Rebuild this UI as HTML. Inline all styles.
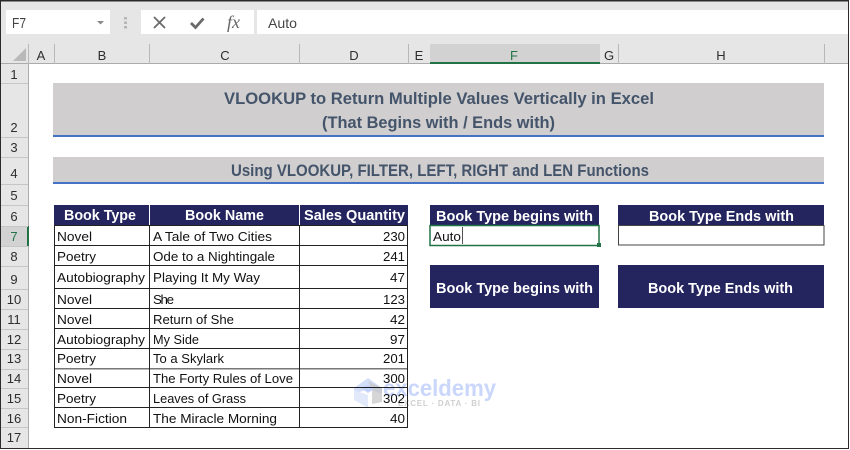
<!DOCTYPE html>
<html><head><meta charset="utf-8"><style>
html,body{margin:0;padding:0;background:#fff;width:850px;height:450px;overflow:hidden}
svg{display:block;font-family:"Liberation Sans",sans-serif;filter:blur(.3px)}
.b{font-size:13.3px;fill:#111}
.h{font-size:14.6px;font-weight:bold;fill:#fff}
.t{font-size:17px;font-weight:bold;fill:#44546a}
.c{font-size:13px;fill:#2e2e2e;text-anchor:middle}
.r{font-size:13px;fill:#2e2e2e;text-anchor:middle}
.wm{mix-blend-mode:multiply}
</style></head><body>
<svg width="850" height="450" viewBox="0 0 850 450">
<rect width="850" height="450" fill="#fff"/>
<rect x="0" y="0" width="850" height="64" fill="#e6e6e6"/>
<rect x="0" y="64" width="28" height="386" fill="#e6e6e6"/>
<!-- formula bar -->
<rect x="6" y="10" width="104" height="24" fill="#fff"/>
<text x="12" y="28" font-size="14.5" fill="#444" textLength="14" lengthAdjust="spacingAndGlyphs">F7</text>
<path d="M97 21h7l-3.500 3.500z" fill="#8a8a8a"/>
<g fill="#b5b5b5"><rect x="124" y="17" width="3" height="2.500"/><rect x="124" y="21.500" width="3" height="2.500"/><rect x="124" y="26" width="3" height="2.500"/></g>
<rect x="141" y="10" width="113" height="24" fill="#fff"/>
<rect x="257" y="10" width="593" height="24" fill="#fff"/>
<path d="M154 17l11 11M165 17l-11 11" stroke="#6a6a6a" stroke-width="1.800" fill="none"/>
<path d="M191 23l4.500 4.500 8-9" stroke="#6a6a6a" stroke-width="2.800" fill="none"/>
<text x="227" y="28" font-family="Liberation Serif" font-style="italic" font-size="18" fill="#666" textLength="13" lengthAdjust="spacingAndGlyphs">fx</text>
<text x="268" y="28" font-size="13.800" fill="#444" textLength="29" lengthAdjust="spacingAndGlyphs">Auto</text>
<!-- col headers -->
<rect x="430" y="44" width="170" height="20" fill="#d2d2d2"/>
<rect x="430" y="62" width="170" height="2" fill="#217346"/>
<rect x="0" y="63" width="430" height="1" fill="#ababab"/><rect x="600" y="63" width="250" height="1" fill="#ababab"/>
<path d="M13 61L26 48V61z" fill="#b9b9b9"/>
<g fill="#b8b8b8"><rect x="28" y="44" width="1" height="20"/><rect x="54" y="44" width="1" height="20"/><rect x="149" y="44" width="1" height="20"/><rect x="299" y="44" width="1" height="20"/><rect x="408" y="44" width="1" height="20"/><rect x="618" y="44" width="1" height="20"/><rect x="824" y="44" width="1" height="20"/></g>
<text x="41" y="60" class="c">A</text><text x="102" y="60" class="c">B</text><text x="225" y="60" class="c">C</text><text x="354" y="60" class="c">D</text><text x="419" y="60" class="c">E</text><text x="514" y="60" class="c" style="fill:#217346">F</text><text x="609" y="60" class="c">G</text><text x="721" y="60" class="c">H</text>
<!-- row headers -->
<rect x="28" y="64" width="1" height="386" fill="#ababab"/>
<rect x="0" y="226" width="28" height="20" fill="#d2d2d2"/>
<rect x="27" y="226" width="2" height="20" fill="#217346"/>
<g fill="#c6c6c6"><rect x="0" y="83" width="28" height="1"/><rect x="0" y="137" width="28" height="1"/><rect x="0" y="157" width="28" height="1"/><rect x="0" y="184" width="28" height="1"/><rect x="0" y="205" width="28" height="1"/><rect x="0" y="226" width="28" height="1"/><rect x="0" y="246" width="28" height="1"/><rect x="0" y="266" width="28" height="1"/><rect x="0" y="289" width="28" height="1"/><rect x="0" y="309" width="28" height="1"/><rect x="0" y="329" width="28" height="1"/><rect x="0" y="349" width="28" height="1"/><rect x="0" y="369" width="28" height="1"/><rect x="0" y="388" width="28" height="1"/><rect x="0" y="408" width="28" height="1"/><rect x="0" y="427" width="28" height="1"/></g>
<text x="14" y="79" class="r">1</text><text x="14" y="132" class="r">2</text><text x="14" y="152" class="r">3</text><text x="14" y="178" class="r">4</text><text x="14" y="200" class="r">5</text><text x="14" y="221" class="r">6</text><text x="14" y="241" class="r" style="fill:#217346">7</text><text x="14" y="261" class="r">8</text><text x="14" y="284" class="r">9</text><text x="14" y="304" class="r">10</text><text x="14" y="324" class="r">11</text><text x="14" y="344" class="r">12</text><text x="14" y="363" class="r">13</text><text x="14" y="383" class="r">14</text><text x="14" y="403" class="r">15</text><text x="14" y="423" class="r">16</text><text x="14" y="442" class="r">17</text>
<!-- titles -->
<rect x="53" y="83" width="771" height="52" fill="#d0cece"/>
<rect x="53" y="135" width="771" height="2" fill="#4472c4"/>
<rect x="53" y="157" width="771" height="25" fill="#d0cece"/>
<rect x="53" y="182" width="771" height="2" fill="#4472c4"/>
<text class="t" x="224" y="104" textLength="430" lengthAdjust="spacingAndGlyphs">VLOOKUP to Return Multiple Values Vertically in Excel</text>
<text class="t" x="322" y="128" textLength="233" lengthAdjust="spacingAndGlyphs">(That Begins with / Ends with)</text>
<text class="t" x="231" y="176" textLength="418" lengthAdjust="spacingAndGlyphs">Using VLOOKUP, FILTER, LEFT, RIGHT and LEN Functions</text>
<!-- table -->
<rect x="54" y="205" width="354" height="21" fill="#24245f"/>
<g fill="#fff"><rect x="149" y="205" width="1" height="21"/><rect x="299" y="205" width="1" height="21"/></g>
<text class="h" x="64" y="220" textLength="72" lengthAdjust="spacingAndGlyphs">Book Type</text>
<text class="h" x="185" y="220" textLength="79" lengthAdjust="spacingAndGlyphs">Book Name</text>
<text class="h" x="304" y="220" textLength="101" lengthAdjust="spacingAndGlyphs">Sales Quantity</text>
<g fill="#222"><rect x="54" y="225" width="354" height="1"/><rect x="54" y="245" width="354" height="1"/><rect x="54" y="265" width="354" height="1"/><rect x="54" y="288" width="354" height="1"/><rect x="54" y="308" width="354" height="1"/><rect x="54" y="328" width="354" height="1"/><rect x="54" y="348" width="354" height="1"/><rect x="54" y="368" width="354" height="1.500" fill="#777"/><rect x="54" y="387" width="354" height="1"/><rect x="54" y="407" width="354" height="1"/><rect x="54" y="427" width="354" height="1"/><rect x="54" y="226" width="1" height="202"/><rect x="149" y="226" width="1" height="202"/><rect x="299" y="226" width="1" height="202"/><rect x="407" y="226" width="1" height="202"/></g>
<text class="b" x="57" y="241" textLength="35" lengthAdjust="spacingAndGlyphs">Novel</text>
<text class="b" x="153" y="241" textLength="119" lengthAdjust="spacingAndGlyphs">A Tale of Two Cities</text>
<text class="b" x="383" y="241" textLength="22" lengthAdjust="spacingAndGlyphs">230</text>
<text class="b" x="57" y="261" textLength="39" lengthAdjust="spacingAndGlyphs">Poetry</text>
<text class="b" x="153" y="261" textLength="122" lengthAdjust="spacingAndGlyphs">Ode to a Nightingale</text>
<text class="b" x="383" y="261" textLength="22" lengthAdjust="spacingAndGlyphs">241</text>
<text class="b" x="57" y="282" textLength="88" lengthAdjust="spacingAndGlyphs">Autobiography</text>
<text class="b" x="153" y="282" textLength="107" lengthAdjust="spacingAndGlyphs">Playing It My Way</text>
<text class="b" x="390" y="282" textLength="15" lengthAdjust="spacingAndGlyphs">47</text>
<text class="b" x="57" y="304" textLength="35" lengthAdjust="spacingAndGlyphs">Novel</text>
<text class="b" x="153" y="304" textLength="21" lengthAdjust="spacing">She</text>
<text class="b" x="383" y="304" textLength="22" lengthAdjust="spacingAndGlyphs">123</text>
<text class="b" x="57" y="324" textLength="35" lengthAdjust="spacingAndGlyphs">Novel</text>
<text class="b" x="153" y="324" textLength="81" lengthAdjust="spacingAndGlyphs">Return of She</text>
<text class="b" x="390" y="324" textLength="15" lengthAdjust="spacingAndGlyphs">42</text>
<text class="b" x="57" y="344" textLength="88" lengthAdjust="spacingAndGlyphs">Autobiography</text>
<text class="b" x="153" y="344" textLength="46" lengthAdjust="spacingAndGlyphs">My Side</text>
<text class="b" x="390" y="344" textLength="15" lengthAdjust="spacingAndGlyphs">97</text>
<text class="b" x="57" y="363" textLength="39" lengthAdjust="spacingAndGlyphs">Poetry</text>
<text class="b" x="153" y="363" textLength="71" lengthAdjust="spacingAndGlyphs">To a Skylark</text>
<text class="b" x="383" y="363" textLength="22" lengthAdjust="spacingAndGlyphs">201</text>
<text class="b" x="57" y="383" textLength="35" lengthAdjust="spacingAndGlyphs">Novel</text>
<text class="b" x="153" y="383" textLength="140" lengthAdjust="spacingAndGlyphs">The Forty Rules of Love</text>
<text class="b" x="383" y="383" textLength="22" lengthAdjust="spacingAndGlyphs">300</text>
<text class="b" x="57" y="403" textLength="39" lengthAdjust="spacingAndGlyphs">Poetry</text>
<text class="b" x="153" y="403" textLength="93" lengthAdjust="spacingAndGlyphs">Leaves of Grass</text>
<text class="b" x="383" y="403" textLength="22" lengthAdjust="spacingAndGlyphs">302</text>
<text class="b" x="57" y="423" textLength="70" lengthAdjust="spacingAndGlyphs">Non-Fiction</text>
<text class="b" x="153" y="423" textLength="124" lengthAdjust="spacingAndGlyphs">The Miracle Morning</text>
<text class="b" x="390" y="423" textLength="15" lengthAdjust="spacingAndGlyphs">40</text>
<!-- right boxes -->
<rect x="430" y="205" width="169" height="20" fill="#24245f"/>
<rect x="618" y="205" width="206" height="20" fill="#24245f"/>
<text class="h" x="436" y="221" textLength="157" lengthAdjust="spacingAndGlyphs">Book Type begins with</text>
<text class="h" x="649" y="221" textLength="145" lengthAdjust="spacingAndGlyphs">Book Type Ends with</text>
<rect x="430" y="225.500" width="169" height="20" fill="#fff" stroke="#217346" stroke-width="1.500"/>
<rect x="597" y="243" width="4" height="4" fill="#217346"/>
<rect x="462" y="227" width="1" height="17" fill="#555"/>
<text class="b" x="433" y="241" textLength="28" lengthAdjust="spacingAndGlyphs">Auto</text>
<rect x="618.500" y="225.500" width="205.500" height="19.500" fill="#fff" stroke="#444" stroke-width="1"/>
<rect x="430" y="265" width="169" height="43" fill="#24245f"/>
<rect x="618" y="265" width="206" height="43" fill="#24245f"/>
<text class="h" x="436" y="293" textLength="157" lengthAdjust="spacingAndGlyphs">Book Type begins with</text>
<text class="h" x="648" y="293" textLength="145" lengthAdjust="spacingAndGlyphs">Book Type Ends with</text>
<!-- watermark -->
<g class="wm">
<path d="M354 388l14-10 14 10v6l-14-5-14 5z" fill="#d3defa"/>
<path d="M368 381l14 7v14l-10 2v-13z" fill="#c4c4c4" opacity=".7"/>
<path d="M354 390l14 5v13l-14-8z" fill="#e2e9fb"/>
<path d="M361 388l7-3 6 4-6 4z" fill="#c3d3fa"/>
<text x="383" y="396" font-size="23" font-weight="bold" fill="#cad7fb" textLength="113" lengthAdjust="spacingAndGlyphs">exceldemy</text>
<text x="398" y="406" font-size="8" font-weight="bold" fill="#cfcfcf" textLength="82" lengthAdjust="spacing">EXCEL · DATA · BI</text>
</g>
<!-- window edges -->
<rect x="0" y="0" width="850" height="1.500" fill="#2b2b2b"/>
<rect x="0" y="0" width="1" height="450" fill="#2b2b2b"/>
<rect x="848" y="0" width="1" height="449" fill="#2b2b2b"/>
<rect x="0" y="448" width="850" height="1" fill="#2b2b2b"/>
<rect x="849" y="0" width="1" height="450" fill="#fff"/><rect x="0" y="449" width="850" height="1" fill="#fff"/>
</svg>
</body></html>
